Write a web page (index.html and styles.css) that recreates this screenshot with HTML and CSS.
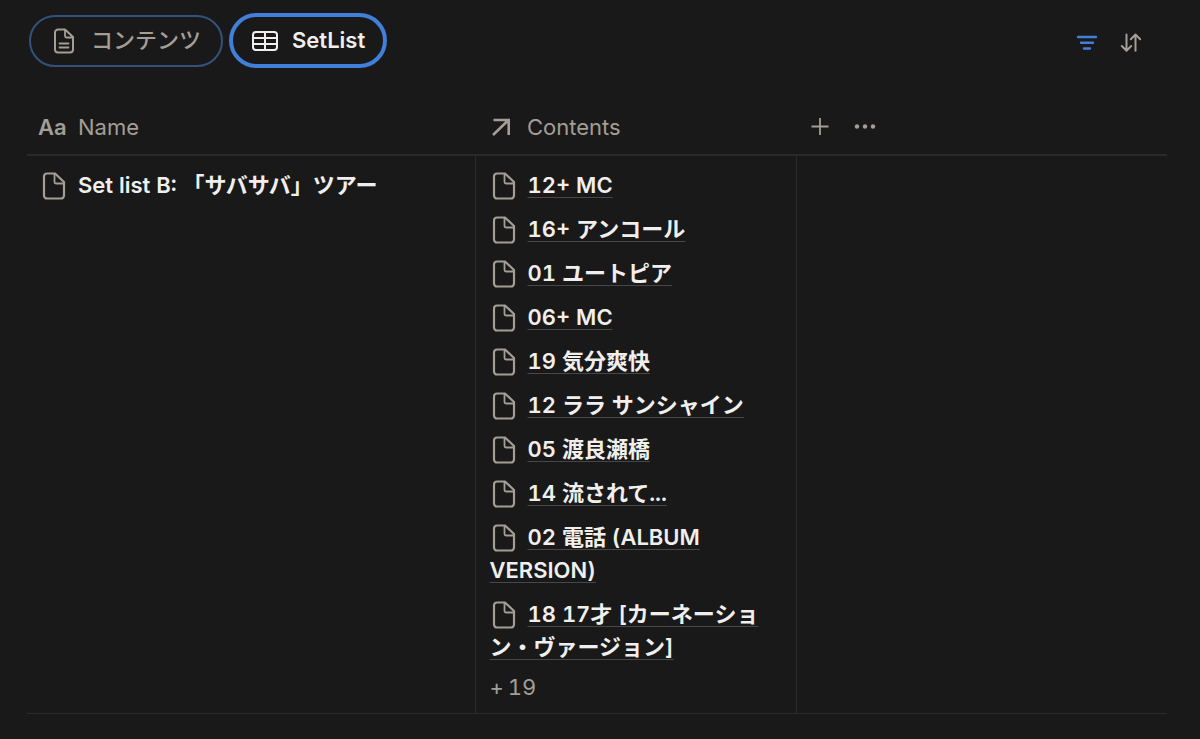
FILE: index.html
```html
<!DOCTYPE html>
<html lang="ja">
<head>
<meta charset="UTF-8">
<meta name="viewport" content="width=device-width, initial-scale=1.0">
<title>SetList</title>
<link rel="stylesheet" href="styles.css">
</head>
<body>

<!-- Shared page icon -->
<svg class="defs" width="0" height="0" aria-hidden="true">
  <symbol id="page" viewBox="0 0 24 28">
    <path d="M5 1.500h8L22 10v13.500a3 3 0 0 1-3 3H5a3 3 0 0 1-3-3v-19a3 3 0 0 1 3-3z" fill="none" stroke="currentColor" stroke-width="2.200" stroke-linejoin="round"/>
    <path d="M12.500 2v8a1.500 1.500 0 0 0 1.500 1.500h7.500" fill="none" stroke="currentColor" stroke-width="1.800"/>
  </symbol>
</svg>

<header class="toolbar">
  <nav class="tabs">
    <button type="button" class="tab">
      <svg width="20" height="26" viewBox="0 0 20 26" fill="none" stroke="currentColor" stroke-width="2" stroke-linejoin="round" stroke-linecap="round">
        <path d="M4 1.500h7L19 9v12.500a3 3 0 0 1-3 3H4a3 3 0 0 1-3-3v-17a3 3 0 0 1 3-3z"/>
        <path d="M11 2v6a1.500 1.500 0 0 0 1.500 1.500H18.500M5.500 15.500h9M5.500 19.500h9" stroke-width="1.800"/>
      </svg>
      コンテンツ
    </button>
    <button type="button" class="tab active">
      <svg width="26" height="20" viewBox="0 0 26 20" fill="none" stroke="currentColor" stroke-width="2">
        <rect x="1" y="1" width="24" height="18" rx="3"/>
        <path d="M1 7h24M1 13h24M13 1v18"/>
      </svg>
      SetList
    </button>
  </nav>
  <div class="actions">
    <button type="button" class="icon-button filter" aria-label="Filter">
      <svg width="22" height="22" viewBox="0 0 22 22" fill="none" stroke="currentColor" stroke-width="2.400" stroke-linecap="round">
        <path d="M2 5h18M5 10.800h12M8 16.500h6"/>
      </svg>
    </button>
    <button type="button" class="icon-button" aria-label="Sort">
      <svg width="22" height="22" viewBox="0 0 22 22" fill="none" stroke="currentColor" stroke-width="2" stroke-linecap="round" stroke-linejoin="round">
        <path d="M6.500 2.500v16M1.800 14l4.700 4.700 4.700-4.700M15.500 18.700v-16M10.800 7.200l4.700-4.700 4.700 4.700"/>
      </svg>
    </button>
  </div>
</header>

<table class="database">
  <thead>
    <tr>
      <th class="col-name">
        <div class="heading"><b class="aa">Aa</b>Name</div>
      </th>
      <th class="col-contents">
        <div class="heading">
          <svg class="arrow" width="24" height="20" viewBox="0 0 24 20" fill="none" stroke="currentColor" stroke-width="2.600">
            <path d="M6.500 3H21.700v15M21 3.500L6 18"/>
          </svg>
          Contents
        </div>
      </th>
      <th class="col-new">
        <div class="column-buttons">
          <button type="button" class="icon-button" aria-label="Add property">
            <svg width="20" height="20" viewBox="0 0 20 20" stroke="currentColor" stroke-width="1.800"><path d="M1.500 9.500h17M10 1v17"/></svg>
          </button>
          <button type="button" class="icon-button" aria-label="More">
            <svg width="22" height="20" viewBox="0 0 22 20" fill="currentColor"><circle cx="3" cy="9.500" r="2.200"/><circle cx="11" cy="9.500" r="2.200"/><circle cx="19" cy="9.500" r="2.200"/></svg>
          </button>
        </div>
      </th>
    </tr>
  </thead>
  <tbody>
    <tr>
      <td class="name">
        <svg class="page-icon"><use href="#page"/></svg>Set list B: 「サバサバ」ツアー
      </td>
      <td>
        <ul class="relations">
          <li><svg class="page-icon"><use href="#page"/></svg><a href="#">12+ MC</a></li>
          <li><svg class="page-icon"><use href="#page"/></svg><a href="#">16+ アンコール</a></li>
          <li><svg class="page-icon"><use href="#page"/></svg><a href="#">01 ユートピア</a></li>
          <li><svg class="page-icon"><use href="#page"/></svg><a href="#">06+ MC</a></li>
          <li><svg class="page-icon"><use href="#page"/></svg><a href="#">19 気分爽快</a></li>
          <li><svg class="page-icon"><use href="#page"/></svg><a href="#">12 ララ サンシャイン</a></li>
          <li><svg class="page-icon"><use href="#page"/></svg><a href="#">05 渡良瀬橋</a></li>
          <li><svg class="page-icon"><use href="#page"/></svg><a href="#">14 流されて...</a></li>
          <li><svg class="page-icon"><use href="#page"/></svg><a href="#">02 電話 (ALBUM VERSION)</a></li>
          <li><svg class="page-icon"><use href="#page"/></svg><a href="#">18 17才 [カーネーション・ヴァージョン]</a></li>
        </ul>
        <div class="more"><span class="plus">+</span>19</div>
      </td>
      <td></td>
    </tr>
  </tbody>
</table>

</body>
</html>
```
FILE: styles.css
```css
body {
  margin: 0;
  padding: 13px 33px 0 27px;
  background: #191919;
  color: #f0efed;
  font-family: Inter, "Noto Sans CJK JP", sans-serif;
  font-size: 22px;
  line-height: 33px;
  font-variant-numeric: tabular-nums;
}
.defs {
  position: absolute;
}
button {
  font: inherit;
  color: inherit;
  background: none;
  cursor: pointer;
}
svg {
  flex: none;
}

/* View tabs and tools */
.toolbar {
  display: flex;
  justify-content: space-between;
  align-items: center;
  padding: 0 25px 0 2px;
}
.tabs {
  display: flex;
  align-items: center;
  gap: 6px;
}
.tab {
  display: flex;
  align-items: center;
  gap: 17px;
  height: 52px;
  padding: 0 20px 0 23px;
  border: 2px solid #34517c;
  border-radius: 28px;
  color: #a39e96;
  font-weight: 500;
}
.tab.active {
  gap: 14px;
  height: 55px;
  padding: 0 18px 0 19px;
  border: 4px solid #427fd8;
  color: #f0efed;
  font-weight: 600;
}
.actions {
  display: flex;
  gap: 22px;
  padding-top: 5px;
  color: #a39e96;
}
.icon-button {
  display: flex;
  padding: 0;
  border: none;
}
.filter {
  color: #427fd8;
}

/* Table */
.database {
  width: 100%;
  margin-top: 32px;
  border-collapse: collapse;
  table-layout: fixed;
}
th {
  height: 54px;
  padding: 0 12px;
  border-bottom: 2px solid #2a2a2a;
  color: #a39e96;
  font-weight: 400;
  text-align: left;
}
.col-name {
  width: 425px;
  padding: 0 12px 0 11px;
}
.col-contents {
  width: 297px;
}
.col-new {
  padding-left: 14px;
}
td {
  padding: 13px 14px 9px;
  border-bottom: 1px solid #2a2a2a;
  vertical-align: top;
}
td + td {
  border-left: 1px solid #2a2a2a;
}
.heading,
.column-buttons {
  display: flex;
  align-items: center;
}
.aa {
  width: 40px;
  font-weight: 600;
}
.arrow {
  margin-right: 16px;
}
.column-buttons {
  gap: 24px;
  color: #a39e96;
}
.name {
  font-weight: 600;
}
.page-icon {
  width: 24px;
  height: 28px;
  margin-right: 12px;
  margin-left: 1px;
  color: #a39e96;
  vertical-align: -7px;
}
.relations {
  margin: 0;
  padding: 0;
  list-style: none;
  font-weight: 600;
}
.relations .page-icon {
  margin-left: 2px;
}
.relations li {
  margin-bottom: 11px;
}
.relations li:last-child {
  margin-bottom: 7px;
}
.relations a {
  color: inherit;
  text-decoration: underline 1px #474747;
  text-underline-offset: 4px;
  text-decoration-skip-ink: none;
}
.more {
  color: #a39e96;
}
.plus {
  margin-right: 4px;
}
```
